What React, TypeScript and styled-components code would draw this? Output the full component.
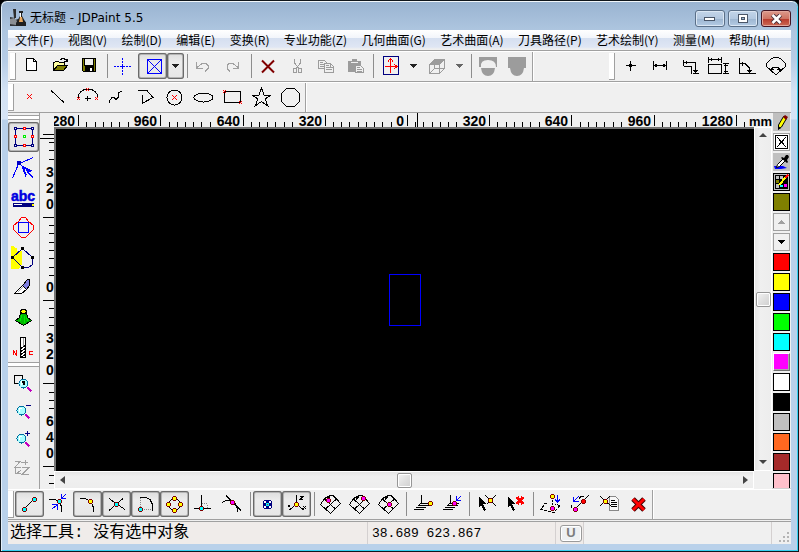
import React from 'react';
import styled, { createGlobalStyle, css } from 'styled-components';

const UI_FONT = '"Noto Sans CJK SC", "Noto Sans", sans-serif';
const FACE = '#f0f0f0';
const SHADE = '#a0a0a0';

const GlobalStyle = createGlobalStyle`
  *, *::before, *::after { box-sizing: border-box; }
  body { margin: 0; background: #000; font-family: ${UI_FONT}; font-size: 12px; overflow: hidden; }
  button { margin: 0; padding: 0; border: 0; background: none; font: inherit; color: inherit; }
  svg { display: block; flex: none; }
`;

/* ---------- window frame ---------- */

const Window = styled.main`
  display: flex;
  flex-direction: column;
  height: 100vh;
  padding: 0 6px 7px;
  border: 1px solid #10161c;
  border-radius: 7px 7px 0 0;
  box-shadow: inset 0 1px 0 #f2f7fb, inset 1px 0 0 #e4eff9, inset -1px 0 0 #36d0f0, inset 0 -1px 0 #36d0f0;
  background: linear-gradient(#99b3d1 0, #aec6e0 30px, #b7cde6 60px, #d3e2f4 90px, #d6e4f5 118px, #b9d1ea 119px, #b9d1ea 100%);
`;

const TitleBar = styled.header`
  display: flex;
  align-items: center;
  height: 29px;
  padding: 5px 1px 0 2px;
  flex: none;
`;

const Title = styled.h1`
  flex: 1;
  margin: 0 0 0 4px;
  font-family: "DejaVu Sans", "Noto Sans CJK SC", sans-serif;
  font-size: 12px;
  line-height: 18px;
  font-weight: 400;
  color: #000;
`;

const CaptionButtons = styled.div`
  display: flex;
  gap: 3px;
  align-self: flex-start;
  margin-top: 4px;
`;

const CaptionButton = styled.button<{ $close?: boolean }>`
  display: grid;
  place-items: center;
  width: 30px;
  height: 17px;
  border: 1px solid ${p => (p.$close ? '#431422' : '#5a6f88')};
  border-radius: 3px;
  box-shadow: inset 0 0 0 1px ${p => (p.$close ? '#e3a79c' : '#dbe7f4')};
  background: ${p =>
    p.$close
      ? 'linear-gradient(#dc9a8c 0, #cf7463 50%, #b8382a 51%, #cc6a55 100%)'
      : 'linear-gradient(#c3d5e9 0, #b3c8e0 50%, #9cb5d0 51%, #b4cbe4 100%)'};
`;

const Client = styled.div`
  display: flex;
  flex-direction: column;
  flex: 1;
  min-height: 0;
  margin: 0 1px;
  background: ${FACE};
`;

const MenuBar = styled.nav`
  display: flex;
  justify-content: space-between;
  flex: none;
  height: 21px;
  padding: 0 21px 0 7px;
  border-bottom: 1px solid ${SHADE};
  background: linear-gradient(#fff 0, #f2f5fb 40%, #d5dff0 41%, #dfe6f4 85%, #f0f0f0 95%);
`;

const MenuItem = styled.button`
  line-height: 20px;
  color: #000;
  white-space: nowrap;
`;

/* ---------- tool bars ---------- */

const BarRow = styled.div`
  display: flex;
  flex: none;
  height: 31px;
  border-top: 1px solid #fff;
  border-bottom: 1px solid ${SHADE};
`;

const Bar = styled.div<{ $lead?: number; $end?: boolean; $push?: boolean }>`
  display: flex;
  padding: 1px 0 0 ${p => p.$lead ?? 2}px;
  ${p => p.$push && css`margin-left: auto; padding-right: 1px;`}
  ${p => p.$end && css`border-right: 1px solid ${SHADE}; box-shadow: 1px 0 0 #fff;`}
`;

const Grip = styled.span`
  width: 6px;
  margin: 0 1px 1px 0;
  border-right: 1px solid ${SHADE};
  border-bottom: 1px solid ${SHADE};
  background: #fff;
`;

const Gap = styled.span<{ $tight?: boolean }>`
  flex: none;
  width: ${p => (p.$tight ? 5 : 6)}px;
  height: 24px;
  margin-top: 1px;
  background: linear-gradient(#8d8d8d, #8d8d8d) 3px 0 / 1px 100% no-repeat;
`;

const pressedLook = css`
  border-radius: 3px;
  background: linear-gradient(#dcdcdc, #ececec 35%, #e6e6e6);
  box-shadow: inset 0 0 0 1px #6a6a6a, inset 0 0 0 2px #b4b4b4;
`;

const Tool = styled.button<{ $pressed?: boolean }>`
  flex: none;
  width: 29px;
  height: 26px;
  ${p => p.$pressed && pressedLook}
`;

const Arrow = styled.button<{ $pressed?: boolean }>`
  display: grid;
  place-items: center;
  flex: none;
  width: 17px;
  height: 26px;
  ${p => p.$pressed && pressedLook}
`;

/* ---------- work area ---------- */

const Work = styled.div`
  display: flex;
  flex: 1;
  min-height: 0;
`;

const ToolBox = styled.aside`
  display: flex;
  flex-direction: column;
  flex: none;
  width: 32px;
  padding-top: 2px;
  border-right: 1px solid ${SHADE};
`;

const SideGrip = styled.span`
  height: 5px;
  flex: none;
  margin-bottom: 2px;
  border-top: 1px solid ${SHADE};
  border-bottom: 1px solid ${SHADE};
  background: #fff;
`;

const SideTool = styled.button<{ $pressed?: boolean; $short?: boolean }>`
  display: grid;
  place-items: center;
  flex: none;
  width: 31px;
  height: ${p => (p.$short ? 28 : 30)}px;
  ${p => p.$pressed && pressedLook}
`;

const Board = styled.section`
  display: grid;
  flex: 1;
  min-width: 0;
  grid-template-columns: 14px minmax(0, 1fr) 18px;
  grid-template-rows: 14px minmax(0, 1fr) 18px;
`;

const TopScale = styled.div`
  grid-area: 1 / 2 / 2 / 4;
  overflow-x: clip;
  overflow-y: visible;
  svg { overflow: visible; }
`;

const LeftScale = styled.div`
  grid-area: 2 / 1 / 4 / 2;
  overflow: hidden;
`;

const Canvas = styled.div`
  grid-area: 2 / 2 / 3 / 3;
  display: grid;
  place-items: center;
  border-top: 2px solid #747474;
  border-left: 2px solid #747474;
  background: #000;
`;

const Scroll = styled.div<{ $vertical?: boolean }>`
  grid-area: ${p => (p.$vertical ? '2 / 3 / 3 / 4' : '3 / 2 / 4 / 3')};
  display: flex;
  flex-direction: ${p => (p.$vertical ? 'column' : 'row')};
  align-items: center;
  justify-content: space-between;
  border: 1px solid #fff;
  background: linear-gradient(${p => (p.$vertical ? '90deg, ' : '')}#e6e6e6, #f0f0f0 30%, #ededed);
`;

const ScrollArrow = styled.button`
  display: grid;
  place-items: center;
  width: 16px;
  height: 16px;
`;

const Thumb = styled.span`
  width: 15px;
  height: 15px;
  border: 1px solid #969696;
  border-radius: 2px;
  box-shadow: inset 0 0 0 1px #fff;
  background: linear-gradient(135deg, #f4f4f4, #e0e0e0 50%, #cfcfcf);
`;

const Palette = styled.aside`
  display: flex;
  flex-direction: column;
  gap: 2px;
  flex: none;
  width: 19px;
  padding: 0 1px;
  overflow: hidden;
  border-bottom: 1px solid #d0d0d0;
`;

const Swatch = styled.button<{ $color?: string; $look?: 'raised' | 'flat' | 'frame' }>`
  display: grid;
  place-items: center;
  flex: none;
  width: 17px;
  height: 18px;
  border: 1px solid #000;
  background: ${p => p.$color ?? '#c0c0c0'};
  ${p => p.$look === 'flat' && css`border-color: #c0c0c0;`}
  ${p => p.$look === 'frame' && css`border-color: #a0a0a0;`}
  ${p => p.$look === 'raised' && css`
    border-color: #fff #707070 #707070 #fff;
    box-shadow: inset -1px -1px 0 #a8a8a8;
  `}
`;

/* ---------- status bar ---------- */

const StatusBar = styled.footer`
  display: flex;
  flex: none;
  height: 23px;
  margin-top: 1px;
  border-top: 1px solid ${SHADE};
  font-family: "Liberation Mono", "Noto Sans CJK SC", monospace;
  font-size: 16px;
  line-height: 21px;
  color: #000;
`;

const StatusCell = styled.div<{ $grow?: boolean; $width?: number; $plain?: boolean }>`
  display: flex;
  align-items: center;
  min-width: 0;
  padding-left: 2px;
  white-space: nowrap;
  border-right: 1px solid #d4d0d0;
  background: ${p => (p.$plain ? FACE : '#f0ecea')};
  ${p => (p.$grow ? css`flex: 1;` : css`flex: 0 0 ${p.$width}px;`)}
`;

const Coordinates = styled.output`
  padding-left: 2px;
  font-size: 13px;
`;

const UnitKey = styled.button`
  width: 22px;
  height: 17px;
  margin-left: 2px;
  border: 1px solid #9a9a9a;
  border-radius: 3px;
  box-shadow: inset 0 0 0 1px #fff;
  background: #eef0f2;
  font: bold 13px/14px "Liberation Sans", sans-serif;
  color: #7c7c7c;
`;

const SizeCorner = styled.div`
  display: flex;
  align-items: flex-end;
  justify-content: flex-end;
  flex: none;
  width: 19px;
  padding: 0 1px 1px 0;
`;

/* ---------- glyph helpers ---------- */

type GlyphProps = { children: React.ReactNode; color?: string; h?: number; smooth?: boolean };

const Glyph = ({ children, color = '#000', h = 26, smooth }: GlyphProps) => (
  <svg width="29" height={h} viewBox={`0 0 29 ${h}`} fill="none" stroke={color}
    shapeRendering={smooth ? 'auto' : 'crispEdges'} aria-hidden="true">
    {children}
  </svg>
);

const RedX = ({ x, y }: { x: number; y: number }) => (
  <path fill="#f00" stroke="none" d={[-2, -1, 0, 1, 2].map(n =>
    `M${x + n} ${y + n}h1v1h-1zM${x + n} ${y - n}h1v1h-1z`).join('')} fillRule="nonzero" />
);

const Dot = ({ x, y, c }: { x: number; y: number; c: string }) => (
  <>
    <path fill="#800000" stroke="none" d={`M${x - 1} ${y - 2}h3v1h1v3h-1v1h-3v-1h-1v-3h1z`} />
    <rect x={x - 1} y={y - 1} width="3" height="3" fill={c} stroke="none" />
  </>
);

const DownMark = ({ color = '#222' }: { color?: string }) => (
  <svg width="7" height="4" viewBox="0 0 7 4" shapeRendering="crispEdges" aria-hidden="true">
    <path fill={color} d="M0 0h7v1h-1v1h-1v1h-1v1h-1v-1h-1v-1h-1v-1h-1z" />
  </svg>
);

const TURN = { up: 'M0 5l4-4 4 4z', down: 'M0 2l4 4 4-4z', left: 'M6 0L1 4l5 4z', right: 'M2 0l5 4-5 4z' };
const ScrollMark = ({ to }: { to: keyof typeof TURN }) => (
  <svg width="8" height="8" viewBox="0 0 8 8" aria-hidden="true"><path fill="#444" d={TURN[to]} /></svg>
);

const MESH = 'M4.5 13.5l4-6 6-3h3l7 8-10 10zM8.500 8l11 10M17.500 5l3 3M20.500 8l-11 10M14.500 4.500l-4 5';

const Hatch = () => <path d="M13.500 4v8M13 12.500h9M11 14.500h10M8 16.500h10M6 18.500h10M13 12l-3 3" />;
const Pointer = () => <path fill="#000" stroke="none" d="M7 6l7 7h-3l3 6-2 1-3-6-2 3z" />;

/* ---------- tool data ---------- */

type Item = { name: string; art: React.ReactNode; on?: boolean };

const fileTools: Item[] = [
  { name: '新建', art: <Glyph><path fill="#fff" d="M9.5 5.5h7l3 3v9h-10z" /><path d="M16.5 5.5v3h3" /></Glyph> },
  {
    name: '打开', art: <Glyph>
      <path fill="#ffffa0" d="M7.5 17.5v-8h1l1-1h3l1 1h5v3" />
      <path fill="#808000" d="M7.5 17.5l4-5h10l-4 5z" />
      <path d="M14 6.5h1v-1h3v1h2v2M18 8.5h4M21.5 6v3" />
    </Glyph>,
  },
  {
    name: '保存', art: <Glyph>
      <path fill="#808000" d="M7.5 5.5h13v13h-12l-1-1z" />
      <rect x="10" y="6" width="8" height="6" fill="#f0f0f0" stroke="none" />
      <rect x="10" y="13" width="9" height="5" fill="#000" stroke="none" />
      <rect x="15" y="15" width="2" height="3" fill="#fff" stroke="none" />
      <path d="M9.5 6v6h9v-6" />
    </Glyph>,
  },
];

const editTools: Item[] = [
  { name: '删除', art: <Glyph color="#800000" smooth><path strokeWidth="2" d="M8 7.500l12 12M20 7.500l-12 12" /></Glyph> },
  {
    name: '剪切', art: <Glyph color="#9c9c9c">
      <path d="M11.500 6v4l4 5M17.500 6v4l-4 5" /><rect x="10.500" y="15.500" width="3" height="4" /><rect x="15.500" y="15.500" width="3" height="4" />
    </Glyph>,
  },
  {
    name: '复制', art: <Glyph color="#9c9c9c">
      <path d="M6.5 7.5h6l3 3v5h-9zM8 9.5h3M8 11.5h4M8 13.5h4" />
      <path fill="#f0f0f0" d="M12.5 10.5h6l3 3v6h-9z" /><path d="M14 12.5h3M14 14.5h6M14 16.5h6M18.5 11v3h3" />
    </Glyph>,
  },
  {
    name: '粘贴', art: <Glyph color="#9c9c9c">
      <path fill="#9c9c9c" d="M7.5 8.5h12v10h-12z" /><path fill="#9c9c9c" d="M11.5 6.5h4v2h-4z" />
      <path stroke="#f0f0f0" d="M10 9.5h7" />
      <path fill="#f0f0f0" d="M14.5 12.5h5l3 3v4h-8z" /><path d="M16 14.5h3M16 16.5h5M16 18.500h5" />
    </Glyph>,
  },
];

const measureTools: Item[] = [
  { name: '点坐标', art: <Glyph><path d="M10 12.5h10M14.5 8v10M13 11.500h3M13 13.500h3" /></Glyph> },
  { name: '两点距离', art: <Glyph><path d="M8.500 8v9M21.500 8v9M9 12.500h12M11.500 11v3M10.500 11v3M18.500 11v3M19.500 11v3" /></Glyph> },
  { name: '折线长度', art: <Glyph><path d="M9.500 7v6M10 9.500h11.500v10M12.500 8v3M19 17.500h5M20 18.500h3M19 20.500h6M10 13.500h7.500v7" /></Glyph> },
  {
    name: '外形尺寸', art: <Glyph>
      <path d="M5.500 11.500h13v9h-13zM5.500 4v6M18.500 4v6M6 6.500h12M8.500 5v3M15.500 5v3M20 10.500h6M20 20.500h6M22.500 11v9M21 12.500h4M21 18.500h4" />
    </Glyph>,
  },
  { name: '角度', art: <Glyph><path d="M7.500 5v16M7 20.500h17M8 10.500h5l4 4v5M10.500 9v4M15 17.500h5M16 18.500h3" /></Glyph> },
  {
    name: '弧度', art: <Glyph>
      <path d="M5.500 10.500l4-4 3-2h5l3 2 4 4v3l-9 8h-1l-9-8zM10.500 17.500v-2l2-1h4l2 1v2M9 16.500h4M16 16.500h4" />
    </Glyph>,
  },
];

const drawTools: Item[] = [
  { name: '点', art: <Glyph><RedX x={14} y={12} /></Glyph> },
  { name: '直线', art: <Glyph><path d="M7 6.500l13 12" /></Glyph> },
  {
    name: '圆弧', art: <Glyph>
      <path d="M5.500 14v-3l2-3 3-2 2-1h4l3 1 3 2 2 3v3M12 14.500h6M14.500 12v5" />
      <path stroke="#f00" d="M4 13l3 3M7 13l-3 3M22 13l3 3M25 13l-3 3M13 4l3 3M16 4l-3 3" />
    </Glyph>,
  },
  { name: '样条曲线', art: <Glyph><path d="M7.500 19v-2l3-4h1l2 2h1l2-2v-4l3-2" /></Glyph> },
  { name: '多义线', art: <Glyph><path d="M7 6.500h9l6 7-11 6v-9" /></Glyph> },
  { name: '圆', art: <Glyph><circle cx="14.500" cy="13.500" r="7.500" /><RedX x={14} y={13} /></Glyph> },
  { name: '椭圆', art: <Glyph><ellipse cx="14.500" cy="13.500" rx="9.500" ry="4.500" /></Glyph> },
  {
    name: '矩形', art: <Glyph><path d="M6.500 7.500h16v11h-16z" />
      <path stroke="#f00" d="M5 6l3 3M8 6l-3 3M21 17l3 3M24 17l-3 3" /></Glyph>,
  },
  { name: '星形', art: <Glyph><path d="M14.500 4l2.500 7h7l-6 4 3 7-6.500-4.500L8 22l3-7-6-4h7z" /></Glyph> },
  { name: '多边形', art: <Glyph><path d="M10.500 4.500h8l5 5v8l-5 5h-8l-5-5v-8z" /></Glyph> },
];

const Corner = ({ x, y, c = '#000080' }: { x: number; y: number; c?: string }) => (
  <rect x={x} y={y} width="2" height="2" stroke={c} fill="#f0f0f0" />
);

const modeTools: Item[] = [
  {
    name: '选择工具', on: true, art: <Glyph h={28}>
      <path stroke="#000080" d="M6.500 5.500h17v17h-17z" />
      <Corner x={5.5} y={4.5} /><Corner x={22.5} y={4.5} /><Corner x={5.5} y={21.5} /><Corner x={22.5} y={21.5} />
      <Corner x={14.5} y={4.5} c="#f00" /><Corner x={14.5} y={21.5} c="#f00" />
      <Corner x={5.5} y={12.5} c="#f00" /><Corner x={22.5} y={12.5} c="#f00" /><Corner x={14.5} y={12.5} c="#0e0" />
    </Glyph>,
  },
  {
    name: '节点编辑', art: <Glyph h={28} color="#00f">
      <path d="M3.500 25l6-14L24 4.500" /><rect x="8" y="8" width="4" height="4" fill="#0000c8" stroke="none" />
      <path fill="#00f" stroke="none" d="M12 12l12 6-5 1 5 5-1 1-5-5-1 5z" /><path stroke="#f0f0f0" d="M16 16l2 5" />
    </Glyph>,
  },
  {
    name: '文字工具', art: <Glyph h={28}>
      <text x="14" y="18" textAnchor="middle" fill="#0000e0" stroke="#0000e0" strokeWidth=".5" fontFamily="Liberation Sans, sans-serif" fontWeight="700" fontSize="14">abc</text>
      <rect x="4" y="20" width="21" height="4" fill="#000080" stroke="none" />
      <path stroke="#fff" d="M5 21.500h8" /><path stroke="#ff0" strokeWidth="2" d="M23 22h2" />
    </Glyph>,
  },
  {
    name: '变换工具', art: <Glyph h={28} color="#f00">
      <path d="M12.500 4.500h4l3 4 5 4v4l-4 4-4 4h-4l-4-4-4-4v-4l5-4z" /><path stroke="#00f" d="M9.500 9.500h10v10h-10z" />
    </Glyph>,
  },
  {
    name: '造型工具', art: <Glyph h={28} color="#000080">
      <path fill="#ff0" stroke="none" d="M2 3h2l2 2h2v3h5v13l-3 5H2z" />
      <path fill="#f0f0f0" stroke="none" d="M13.500 5.500l-1 1v17l1 1h6l4-3v-7z" />
      <path d="M13.500 5.500l-10 9 10 10h6l4-3v-7z" />
      <path fill="#000" stroke="none" d="M12 4h3v3h-3zM2 13h3v3H2zM12 23h3v3h-3zM22 13h3v3h-3z" />
    </Glyph>,
  },
  {
    name: '刻刀工具', art: <Glyph h={28}>
      <path fill="#fff" d="M5.500 20.500l8-8 4 4-5 4z" /><path fill="#8080e0" d="M13.500 12.500l5-6h2v6l-3 4z" />
      <path stroke="#aaa" d="M9 19l5-5" />
    </Glyph>,
  },
  {
    name: '浮雕工具', art: <Glyph h={28}>
      <path fill="#00b800" d="M11.500 9.500l-1 5-4 3 8 5 8-5-4-3-1-5z" /><path stroke="#0e0" d="M13 12l-2 6M15.500 13v7M17 14l2 4" />
      <ellipse cx="14.500" cy="8.500" rx="3" ry="2" fill="#ff0" />
    </Glyph>,
  },
  {
    name: '刀具路径', art: <Glyph h={28}>
      <path fill="#fff" d="M11.500 4.500h5v20h-5z" /><path stroke="#999" d="M14.500 5v8" />
      <path d="M11 16l6-4M11 19l6-4M11 22l6-4M11 25l6-4" />
      <path stroke="#f00" d="M4.500 22v-4l3 4v-5M23.500 18.500h-3v3h3" />
    </Glyph>,
  },
];

const Lens = ({ x, y }: { x: number; y: number }) => (
  <>
    <circle cx={x} cy={y} r="4.500" fill="#a8ffff" stroke="#0070a0" />
    <path stroke="#fff" d={`M${x - 2} ${y + 1}v-3h2`} />
    <path stroke="#c000c0" strokeWidth="2" d={`M${x + 4} ${y + 4}l4 4`} />
  </>
);

const zoomTools: Item[] = [
  { name: '窗口缩放', art: <Glyph><path d="M5.500 5.500h8v8h-8z" /><Lens x={14.5} y={13.5} /><path fill="#000" d="M13 11h2v4z" /></Glyph> },
  { name: '缩小', art: <Glyph><Lens x={12.5} y={12.5} /><path stroke="#000080" d="M17 7.500h5" /></Glyph> },
  { name: '放大', art: <Glyph><Lens x={12.5} y={12.5} /><path stroke="#000080" d="M16 7.500h5M18.500 5v5" /></Glyph> },
  {
    name: '上次视图', art: <Glyph color="#a0a0a0">
      <path d="M6 7.500h5l-5 6h6M12 8.500h7M16.500 6v5M13 13.500h7l-7 7h7M6 14.500l1 5 5-3M7 19.500h5" />
    </Glyph>,
  },
];

const snapGroups: Item[][] = [
  [
    { name: '端点捕捉', on: true, art: <Glyph><path d="M9 18L19 8" /><Dot x={9} y={18} c="#0ff" /><Dot x={19} y={8} c="#0ff" /></Glyph> },
    {
      name: '最近点捕捉', art: <Glyph>
        <path d="M5 8.500h6l4 2 2 4v6" /><Dot x={15} y={10} c="#0ff" />
        <path stroke="#00f" d="M22 3l-4 4M17.500 3v4.500h4M8 18l5-4M8 13.500h5v5" />
      </Glyph>,
    },
    { name: '节点捕捉', on: true, art: <Glyph><path d="M7 7.500h5l6 3 2 5v5" /><Dot x={17} y={10} c="#ff0" /></Glyph> },
    { name: '交点捕捉', on: true, art: <Glyph><path d="M7 7.500l7 5 9 6M7 19.500l7-6 7-6" /><Dot x={14} y={13} c="#0ff" /></Glyph> },
    {
      name: '圆心捕捉', on: true, art: <Glyph>
        <path stroke="#888" strokeDasharray="1 1" d="M9.500 7v11M9 18.500h12" /><path d="M9 6.500h6l4 2 2 4v7" /><Dot x={9} y={18} c="#0ff" />
      </Glyph>,
    },
    {
      name: '象限点捕捉', on: true, art: <Glyph>
        <path d="M12.500 7.500h4l4 4v4l-4 4h-4l-4-4v-4z" />
        <Dot x={14} y={7} c="#ff0" /><Dot x={8} y={13} c="#ff0" /><Dot x={20} y={13} c="#ff0" /><Dot x={14} y={19} c="#ff0" />
      </Glyph>,
    },
    {
      name: '垂足捕捉', art: <Glyph>
        <path d="M5 17.500h17M12.500 4v13" /><path stroke="#888" strokeDasharray="1 1" d="M13 12.500h5v5" /><Dot x={12} y={17} c="#0ff" />
      </Glyph>,
    },
    { name: '切点捕捉', art: <Glyph><path d="M8 4.500l15 15M4 11.500l4-2h5l4 3 2 4v4" /><Dot x={14} y={11} c="#f0f" /></Glyph> },
  ],
  [
    {
      name: '栅格捕捉', on: true, art: <Glyph>
        <path fill="#000080" stroke="none" d="M11 9h7v1h1v7h-1v1h-7v-1h-1v-7h1z" />
        <path fill="#fff" stroke="none" d="M11 10h2v2h-2zM16 10h2v2h-2zM11 15h2v2h-2zM16 15h2v2h-2z" />
        <path fill="#0ff" stroke="none" d="M13 12h3v3h-3z" /><path stroke="#f00" d="M14.500 13v1" />
      </Glyph>,
    },
    {
      name: '坐标系捕捉', on: true, art: <Glyph>
        <path d="M14.500 4v9l-7 6M14.500 13l7 6M18 5.500h3l-3 3h3M6 14l1 2 1-2M21 15l3 3M24 15l-3 3" /><Dot x={14} y={13} c="#ff0" />
      </Glyph>,
    },
  ],
  [
    { name: '曲面点', art: <Glyph><path d={MESH} /><Dot x={12} y={9} c="#f0f" /></Glyph> },
    { name: '曲面边界', art: <Glyph><path d={MESH} /><Dot x={18} y={7} c="#f0f" /></Glyph> },
    { name: '曲面中心', art: <Glyph><path d={MESH} /><Dot x={15} y={13} c="#f0f" /></Glyph> },
  ],
  [
    { name: '平面捕捉', art: <Glyph><Hatch /><Dot x={22} y={12} c="#ff0" /></Glyph> },
    { name: '平面投影', art: <Glyph><Hatch /><Dot x={17} y={12} c="#f0f" /><path stroke="#00f" d="M24 5l-4 4M19.500 5v4.500h4" /></Glyph> },
  ],
  [
    { name: '选择捕捉点', art: <Glyph><Pointer /><path d="M13 4l11 11M24 4l-9 9" /><Dot x={18} y={9} c="#ff0" /></Glyph> },
    { name: '取消捕捉点', art: <Glyph><Pointer /><path stroke="#f00" strokeWidth="3" d="M16 6l6 7M22 6l-6 7" /></Glyph> },
  ],
  [
    {
      name: '投影到面', art: <Glyph>
        <path d="M11 12.500h-2l-4 6 13 3 6-7-5-1" strokeDasharray="3 1" /><path strokeDasharray="2 1" d="M16.500 6v11" />
        <Dot x={16} y={5} c="#ff0" /><Dot x={16} y={17} c="#f0f" /><path stroke="#00f" d="M21.500 4v7M19 8.500l2.500 2.500 2.500-2.500" />
      </Glyph>,
    },
    {
      name: '投影到线', art: <Glyph>
        <path d="M18 10l6-6M7 14l-1 3M14 8l2-3h3" /><path strokeDasharray="2 1" d="M10 18l8-8" />
        <Dot x={18} y={10} c="#f00" /><Dot x={10} y={18} c="#f0f" /><path stroke="#00f" d="M14 5l-5 5M8.500 6v4.500h5" />
      </Glyph>,
    },
    {
      name: '捕捉选项', art: <Glyph>
        <path stroke="#888" fill="#f8f8f8" d="M15.500 5.500h6l3 3v11h-9z" /><path d="M17 9.500h4M17 11.500h6M17 13.500h6M17 15.500h6" />
        <path d="M6 5l11 10M16 5L6 15" /><Dot x={11} y={10} c="#ff0" />
      </Glyph>,
    },
    {
      name: '关闭捕捉', art: <Glyph smooth>
        <path stroke="#400000" strokeWidth="5" d="M10 8l11 11M21 8l-11 11" /><path stroke="#f00" strokeWidth="3" d="M10 8l11 11M21 8l-11 11" />
      </Glyph>,
    },
  ],
];

const menus = ['文件(F)', '视图(V)', '绘制(D)', '编辑(E)', '变换(R)', '专业功能(Z)', '几何曲面(G)', '艺术曲面(A)', '刀具路径(P)', '艺术绘制(Y)', '测量(M)', '帮助(H)'];

const colors: { name: string; value: string; raised?: boolean }[] = [
  { name: '红', value: '#f00' }, { name: '黄', value: '#ff0' }, { name: '蓝', value: '#00f' },
  { name: '绿', value: '#0f0' }, { name: '青', value: '#0ff' }, { name: '品红', value: '#f0f', raised: true },
  { name: '白', value: '#fff' }, { name: '黑', value: '#000' }, { name: '灰', value: '#c0c0c0' },
  { name: '橙', value: '#ff6820' }, { name: '棕', value: '#a52a2a' }, { name: '粉', value: '#ffc0cb' },
];

const Tools = ({ items }: { items: Item[] }) => (
  <>{items.map(t => <Tool key={t.name} aria-label={t.name} $pressed={t.on}>{t.art}</Tool>)}</>
);

/* ---------- rulers ---------- */

const H_ZERO = 354;
const H_STEP = 82.2;
const V_ZERO = 173;
const V_STEP = 83.2;

const TopRuler = () => {
  const marks: React.ReactNode[] = [];
  for (let i = -4; i <= 4; i++) {
    const x = Math.round(H_ZERO + i * H_STEP);
    const label = String(Math.abs(i) * 320);
    const hidden = label.length === 1 ? 1 : label.length;
    marks.push(<path key={`m${i}`} d={`M${x - 0.5} 2v11`} />);
    marks.push(
      <text key={`t${i}`} x={x - 4} y="13" textAnchor="end" fill="#000" stroke="none">{label}</text>,
    );
    for (let k = 1; k <= 9 - hidden; k++) {
      const minor = Math.round(H_ZERO + (i - 1) * H_STEP + (k * H_STEP) / 10);
      if (minor > 0) marks.push(<path key={`n${i}-${k}`} d={`M${minor - 0.5} 9v5`} />);
    }
  }
  return (
    <svg width="718" height="14" stroke="#000" shapeRendering="crispEdges" fontFamily="Liberation Sans, sans-serif" fontWeight="700" fontSize="14" role="img" aria-label="水平标尺">
      {marks}
      <path d="M690.500 9v5M363.500 0v14" />
      <text x="695" y="13" fill="#000" stroke="none" fontSize="13">mm</text>
    </svg>
  );
};

const LeftRuler = () => {
  const marks: React.ReactNode[] = [];
  for (let i = -2; i <= 3; i++) {
    const y = Math.round(V_ZERO + i * V_STEP);
    const digits = String(Math.abs(i) * 320).split('');
    const minors = i === 3 ? 2 : digits.length === 1 ? 7 : 3;
    marks.push(<path key={`m${i}`} d={`M3 ${y + 0.5}h11`} />);
    if (i > -2 && i < 3) {
      digits.forEach((d, n) => marks.push(
        <text key={`t${i}-${n}`} x="6" y={y - 8 - 16 * (digits.length - 1 - n)} fill="#000" stroke="none">{d}</text>,
      ));
    }
    for (let k = 1; k <= minors; k++) {
      const minor = Math.round(V_ZERO + (i - 1) * V_STEP + (k * V_STEP) / 10);
      marks.push(<path key={`n${i}-${k}`} d={`M9 ${minor + 0.5}h5`} />);
    }
  }
  return (
    <svg width="14" height="362" stroke="#000" shapeRendering="crispEdges" fontFamily="Liberation Sans, sans-serif" fontWeight="700" fontSize="14" role="img" aria-label="垂直标尺">
      {marks}
      <path d="M0 11.500h14" />
    </svg>
  );
};

/* ---------- application ---------- */

export default function App() {
  return (
    <>
      <GlobalStyle />
      <Window>
        <TitleBar>
          <svg width="17" height="18" viewBox="0 0 17 18" aria-hidden="true">
            <path fill="#303438" d="M1 8l5 1v2l3-1 8 3v4H1z" /><path fill="#8b8f94" d="M1 10l4-1 4 4-2 3-6-1z" />
            <path fill="#2c2c2c" d="M4 0h3v9H5z" /><path fill="#202020" d="M10 2h4v2h-1v3l4 7v3H7v-3l4-7V4h-1z" />
            <path fill="#e9a75c" d="M11 8h2l1 5h-4z" /><path fill="#fff" d="M11 4h1v4h-1z" />
          </svg>
          <Title>无标题 - JDPaint 5.5</Title>
          <CaptionButtons>
            <CaptionButton aria-label="最小化">
              <svg width="12" height="6" viewBox="0 0 12 6" shapeRendering="crispEdges"><rect x=".5" y="1.500" width="10" height="3" fill="#fff" stroke="#4a5668" /></svg>
            </CaptionButton>
            <CaptionButton aria-label="最大化">
              <svg width="12" height="10" viewBox="0 0 12 10" shapeRendering="crispEdges"><path fill="#fff" stroke="#4a5668" d="M1.500.5h9v8h-9z" /><path fill="#9cb5d0" stroke="#4a5668" d="M4.500 3.500h3v2h-3z" /></svg>
            </CaptionButton>
            <CaptionButton aria-label="关闭" $close>
              <svg width="13" height="10" viewBox="0 0 13 10"><path stroke="#4a3038" strokeWidth="4.500" d="M2.500 1l8 8M10.500 1l-8 8" /><path stroke="#fff" strokeWidth="2.500" d="M2.500 1l8 8M10.500 1l-8 8" /></svg>
            </CaptionButton>
          </CaptionButtons>
        </TitleBar>

        <Client>
          <MenuBar>{menus.map(m => <MenuItem key={m}>{m}</MenuItem>)}</MenuBar>

          <BarRow>
            <Bar $end>
              <Grip />
              <Tools items={fileTools} />
              <Gap $tight />
              <Tool aria-label="定位"><Glyph color="#00f"><path strokeDasharray="2 1" d="M5 13.500h17M13.500 5v17" /><path d="M11 13.500h5M13.500 11v5" /></Glyph></Tool>
              <Tool aria-label="选择模式" $pressed><Glyph color="#00f"><path d="M9.500 6.500h14v14h-14zM9.500 6.500l14 14M23.500 6.500l-14 14" /></Glyph></Tool>
              <Arrow aria-label="选择模式列表" $pressed><DownMark /></Arrow>
              <Gap />
              <Tool aria-label="撤销"><Glyph color="#a0a0a0"><path d="M6.500 9v6h6M7 14.500l5-4h4l2 2v3l-3 3" /></Glyph></Tool>
              <Tool aria-label="重做"><Glyph color="#a0a0a0"><path d="M19.500 9v6h-6M19 14.500l-5-4h-4l-2 2v3l3 3" /></Glyph></Tool>
              <Gap />
              <Tools items={editTools} />
              <Gap />
              <Tool aria-label="坐标轴"><Glyph color="#f00"><path stroke="#000080" d="M7.500 3.500h15v18h-15z" /><path d="M14.500 6v14M9 13.500h12M12 8.500l2.500-3 2.500 3M18 11l3 2.500-3 2.500" /></Glyph></Tool>
              <Arrow aria-label="坐标轴列表"><DownMark /></Arrow>
              <Tool aria-label="视角"><Glyph color="#9c9c9c"><path fill="#9c9c9c" d="M7.500 11.500l5-5h10l-5 5z" /><path d="M7.500 11.500h10v9h-10zM22.500 6.500v9l-5 5M12.500 11v4.500h10M12.500 15.500l-5 5" /></Glyph></Tool>
              <Arrow aria-label="视角列表"><DownMark color="#666" /></Arrow>
              <Gap />
              <Tool aria-label="线框显示"><Glyph smooth color="none"><path fill="#9c9c9c" d="M5 4h18v10h-1q0-7-8-7t-7 7H5z" /><path fill="#9c9c9c" d="M7 15h14q-1 8-7 8t-7-8z" /></Glyph></Tool>
              <Tool aria-label="着色显示"><Glyph smooth color="none"><path fill="#9c9c9c" d="M5 4h18v11h-2q-1 8-7 8t-7-8H5z" /></Glyph></Tool>
            </Bar>
            <Bar $push><Grip /><Tools items={measureTools} /></Bar>
          </BarRow>

          <BarRow>
            <Bar $lead={0} $end><Grip /><Tools items={drawTools} /></Bar>
          </BarRow>

          <Work>
            <ToolBox>
              <SideGrip />
              {modeTools.map(t => <SideTool key={t.name} aria-label={t.name} $pressed={t.on}>{t.art}</SideTool>)}
              <SideGrip />
              {zoomTools.map(t => <SideTool key={t.name} aria-label={t.name} $short>{t.art}</SideTool>)}
            </ToolBox>

            <Board>
              <TopScale><TopRuler /></TopScale>
              <LeftScale><LeftRuler /></LeftScale>
              <Canvas>
                <svg width="32" height="52" fill="none" stroke="#00f" shapeRendering="crispEdges" role="img" aria-label="矩形对象">
                  <rect x=".5" y=".5" width="31" height="51" />
                </svg>
              </Canvas>
              <Scroll $vertical>
                <ScrollArrow aria-label="向上滚动"><ScrollMark to="up" /></ScrollArrow>
                <Thumb />
                <ScrollArrow aria-label="向下滚动"><ScrollMark to="down" /></ScrollArrow>
              </Scroll>
              <Scroll>
                <ScrollArrow aria-label="向左滚动"><ScrollMark to="left" /></ScrollArrow>
                <Thumb />
                <ScrollArrow aria-label="向右滚动"><ScrollMark to="right" /></ScrollArrow>
              </Scroll>
            </Board>

            <Palette>
              <Swatch $look="flat" aria-label="画笔">
                <svg width="15" height="16" viewBox="0 0 15 16"><path fill="#ff0" stroke="#000" d="M4.500 11L9.500 2.500l3 2L7.500 13l-3 2z" /><path fill="#800000" d="M9 3l2-2 3 2-2 3z" /><path fill="#000" d="M4 12l3 2-3 2z" /></svg>
              </Swatch>
              <Swatch $color="#fff" $look="frame" aria-label="无填充">
                <svg width="15" height="16" viewBox="0 0 15 16" fill="none" stroke="#000" shapeRendering="crispEdges"><path d="M1.500 1.500h12v13h-12zM3 3l9 10M12 3l-9 10" /></svg>
              </Swatch>
              <Swatch $look="flat" aria-label="吸管">
                <svg width="15" height="16" viewBox="0 0 15 16"><path fill="#00f" d="M0 12h9l4 2-6 1H1z" /><path fill="#fff" stroke="#000" d="M2.500 13.500l1-3 6-6 2 2-6 6z" /><path fill="#000" d="M8 3l2 1 2-3h2l1 2-2 3 1 2-1 1-6-5z" /></svg>
              </Swatch>
              <Swatch aria-label="调色板">
                <svg width="15" height="16" viewBox="0 0 15 16" shapeRendering="crispEdges">
                  <path fill="#000" d="M1 1h13v14H1z" /><path fill="#c0c0c0" d="M2 2h3v3H2zM6 2h3v3H6zM2 10h3v4H2z" /><path fill="#808000" d="M2 6h3v3H2z" /><path fill="#f0f" d="M10 10h3v3h-3z" /><path fill="#0ff" d="M6 11h3v2H6z" />
                  <path stroke="#ff0" strokeWidth="2" d="M5 11l7-8" /><path stroke="#f00" strokeWidth="2" d="M11 4l3-3" />
                </svg>
              </Swatch>
              <Swatch $color="#808000" aria-label="当前颜色" />
              <Swatch $color={FACE} $look="frame" aria-label="上一组颜色">
                <svg width="7" height="4" viewBox="0 0 7 4" shapeRendering="crispEdges"><path fill="#a0a0a0" d="M3 0h1v1h1v1h1v1h1v1H0V3h1V2h1V1h1z" /></svg>
              </Swatch>
              <Swatch $color={FACE} $look="frame" aria-label="下一组颜色"><DownMark color="#000" /></Swatch>
              {colors.map(c => <Swatch key={c.name} aria-label={c.name} $color={c.value} $look={c.raised ? 'raised' : undefined} />)}
            </Palette>
          </Work>

          <BarRow>
            <Bar $lead={0} $end>
              <Grip />
              {snapGroups.map((group, i) => (
                <React.Fragment key={i}>
                  {i > 0 && <Gap $tight={i === 2 || i === 3} />}
                  <Tools items={group} />
                </React.Fragment>
              ))}
            </Bar>
          </BarRow>

          <StatusBar>
            <StatusCell $width={360}>选择工具: 没有选中对象</StatusCell>
            <StatusCell $grow><Coordinates>38.689 623.867</Coordinates></StatusCell>
            <StatusCell $width={28}><UnitKey aria-label="单位">U</UnitKey></StatusCell>
            <StatusCell $width={188} $plain />
            <SizeCorner>
              <svg width="11" height="11" viewBox="0 0 11 11" fill="#b4b4b4" shapeRendering="crispEdges" aria-hidden="true">
                <path d="M8 0h2v2H8zM4 4h2v2H4zM8 4h2v2H8zM0 8h2v2H0zM4 8h2v2H4zM8 8h2v2H8z" />
              </svg>
            </SizeCorner>
          </StatusBar>
        </Client>
      </Window>
    </>
  );
}
